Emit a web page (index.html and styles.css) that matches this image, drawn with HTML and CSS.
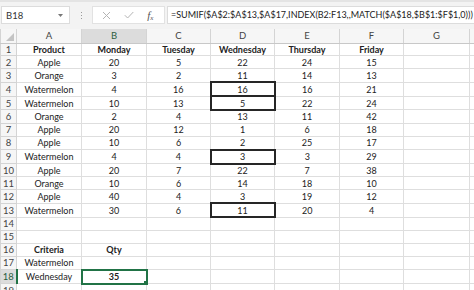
FILE: index.html
```html
<!DOCTYPE html>
<html lang="en">
<head>
    <meta charset="UTF-8">
    <meta name="viewport" content="width=device-width, initial-scale=1.0">
    <title>SUMIF with INDEX MATCH</title>
    <link rel="stylesheet" href="styles.css">
</head>
<body>
    <div class="toolbar">
        <div class="namebox">
            <span>B18</span>
            <svg class="caret" width="5" height="3" viewBox="0 0 5 3"><path d="M0 0h5L2.5 3z" fill="#777"/></svg>
        </div>
        <div class="grip"><i></i><i></i><i></i></div>
        <div class="fx-buttons">
            <svg class="btn-icon" width="9" height="9" viewBox="0 0 9 9"><path d="M1 1l7 7M8 1L1 8" stroke="#b4b4b4" stroke-width="1" fill="none"/></svg>
            <svg class="btn-icon" width="10" height="8" viewBox="0 0 10 8"><path d="M0.8 4.2l2.8 2.8L9.3 1" stroke="#b4b4b4" stroke-width="1" fill="none"/></svg>
            <span class="fx">f<sub>x</sub></span>
        </div>
        <div class="formula">=SUMIF($A$2:$A$13,$A$17,INDEX(B2:F13,,MATCH($A$18,$B$1:$F$1,0)))</div>
    </div>

    <div class="sheet-wrap">
        <table class="sheet">
            <colgroup>
                <col class="c-hdr"><col class="c-65"><col class="c-65"><col class="c-64"><col class="c-64"><col class="c-65"><col class="c-64"><col class="c-66"><col class="c-rest">
            </colgroup>
            <tr class="col-heads">
                <th class="corner"><span class="tri"></span></th>
                <th>A</th><th class="sel-col">B</th><th>C</th><th>D</th><th>E</th><th>F</th><th>G</th><th></th>
            </tr>
            <tr><th>1</th><td class="b">Product</td><td class="b">Monday</td><td class="b">Tuesday</td><td class="b">Wednesday</td><td class="b">Thursday</td><td class="b">Friday</td><td></td><td></td></tr>
            <tr><th>2</th><td>Apple</td><td>20</td><td>5</td><td>22</td><td>24</td><td>15</td><td></td><td></td></tr>
            <tr><th>3</th><td>Orange</td><td>3</td><td>2</td><td>11</td><td>14</td><td>13</td><td></td><td></td></tr>
            <tr><th>4</th><td>Watermelon</td><td>4</td><td>16</td><td class="box">16</td><td>16</td><td>21</td><td></td><td></td></tr>
            <tr><th>5</th><td>Watermelon</td><td>10</td><td>13</td><td class="box">5</td><td>22</td><td>24</td><td></td><td></td></tr>
            <tr><th>6</th><td>Orange</td><td>2</td><td>4</td><td>13</td><td>11</td><td>42</td><td></td><td></td></tr>
            <tr><th>7</th><td>Apple</td><td>20</td><td>12</td><td>1</td><td>6</td><td>18</td><td></td><td></td></tr>
            <tr><th>8</th><td>Apple</td><td>10</td><td>6</td><td>2</td><td>25</td><td>17</td><td></td><td></td></tr>
            <tr><th>9</th><td>Watermelon</td><td>4</td><td>4</td><td class="box">3</td><td>3</td><td>29</td><td></td><td></td></tr>
            <tr><th>10</th><td>Apple</td><td>20</td><td>7</td><td>22</td><td>7</td><td>38</td><td></td><td></td></tr>
            <tr><th>11</th><td>Orange</td><td>10</td><td>6</td><td>14</td><td>18</td><td>10</td><td></td><td></td></tr>
            <tr><th>12</th><td>Apple</td><td>40</td><td>4</td><td>3</td><td>19</td><td>12</td><td></td><td></td></tr>
            <tr><th>13</th><td>Watermelon</td><td>30</td><td>6</td><td class="box">11</td><td>20</td><td>4</td><td></td><td></td></tr>
            <tr><th>14</th><td></td><td></td><td></td><td></td><td></td><td></td><td></td><td></td></tr>
            <tr><th>15</th><td></td><td></td><td></td><td></td><td></td><td></td><td></td><td></td></tr>
            <tr><th>16</th><td class="b">Criteria</td><td class="b">Qty</td><td></td><td></td><td></td><td></td><td></td><td></td></tr>
            <tr><th>17</th><td>Watermelon</td><td></td><td></td><td></td><td></td><td></td><td></td><td></td></tr>
            <tr><th class="sel-row">18</th><td>Wednesday</td><td class="b active">35</td><td></td><td></td><td></td><td></td><td></td><td></td></tr>
            <tr><th>19</th><td></td><td></td><td></td><td></td><td></td><td></td><td></td><td></td></tr>
        </table>
    </div>
</body>
</html>
```

FILE: styles.css
```css
body {
    margin: 0;
    padding: 0;
    width: 474px;
    height: 290px;
    overflow: hidden;
    background-color: #fff;
    font-family: Lato, "Open Sans", sans-serif;
    font-size: 9px;
    color: #222;
}

/* formula bar */
.toolbar {
    display: flex;
    align-items: center;
    height: 29px;
    box-sizing: border-box;
    padding: 5px 0 6px 1px;
    background-color: #f3f3f3;
    border-top: 2px solid #e4e4e4;
}
.namebox {
    width: 69px;
    height: 18px;
    box-sizing: border-box;
    background-color: #fff;
    border: 1px solid #dcdcdc;
    display: flex;
    align-items: center;
    justify-content: space-between;
    padding: 0 6px 0 4px;
    color: #333;
    font-size: 9.5px;
}
.grip {
    width: 22px;
    display: flex;
    flex-direction: column;
    align-items: center;
    gap: 2px;
}
.grip i {
    width: 1px;
    height: 1px;
    background-color: #9a9a9a;
}
.fx-buttons {
    width: 73px;
    height: 18px;
    box-sizing: border-box;
    background-color: #fff;
    border: 1px solid #e2e2e2;
    display: flex;
    align-items: center;
    justify-content: space-around;
    padding: 0 4px 0 2px;
}
.fx {
    font-family: "Liberation Serif", serif;
    font-style: italic;
    font-size: 11px;
    color: #555;
}
.fx sub {
    font-size: 7px;
    vertical-align: -1px;
}
.formula {
    flex: 1;
    height: 18px;
    margin-left: 2px;
    box-sizing: border-box;
    background-color: #fff;
    border: 1px solid #dcdcdc;
    border-right: none;
    padding: 0 0 0 3px;
    line-height: 16px;
    font-size: 9px;
    white-space: nowrap;
    overflow: hidden;
    color: #222;
}

/* grid */
.sheet-wrap {
    overflow: hidden;
}
.sheet {
    border-collapse: collapse;
    table-layout: fixed;
    width: 520px;
}
.c-hdr { width: 16px; }
.c-65 { width: 65px; }
.c-64 { width: 64px; }
.c-66 { width: 66px; }
.c-rest { width: 50px; }

.sheet tr {
    height: 12.9px;
}
.sheet td,
.sheet th {
    height: 11.9px;
    padding: 0;
    border: 1px solid #dedede;
    text-align: center;
    line-height: 11px;
    white-space: nowrap;
    overflow: hidden;
}
.sheet th {
    font-weight: normal;
    font-size: 9.5px;
    color: #444;
    background-color: #f6f6f6;
    border-color: #d4d4d4;
}
.sheet tr.col-heads {
    height: 14px;
}
.sheet tr.col-heads th {
    height: 13px;
    border-top: none;
    border-bottom: 1px solid #c8c8c8;
}
.corner {
    position: relative;
}
.tri {
    position: absolute;
    right: 2px;
    bottom: 2px;
    width: 0;
    height: 0;
    border-left: 8px solid transparent;
    border-bottom: 8px solid #c4c4c4;
}
.sheet th.sel-col {
    background-color: #dcdcdc;
    color: #2b5e3f;
    border-bottom: 2px solid #217346;
}
.sheet th.sel-row {
    background-color: #dcdcdc;
    color: #2b5e3f;
    border-right: 2px solid #217346;
}
.b {
    font-weight: bold;
}
.sheet td.box {
    border: 2px solid #262626;
}
.sheet td.active {
    position: relative;
    border: 2px solid #217346;
}
.sheet td.active::after {
    content: "";
    position: absolute;
    right: -3px;
    bottom: -3px;
    width: 4px;
    height: 4px;
    background-color: #217346;
    border: 1px solid #fff;
}
```
